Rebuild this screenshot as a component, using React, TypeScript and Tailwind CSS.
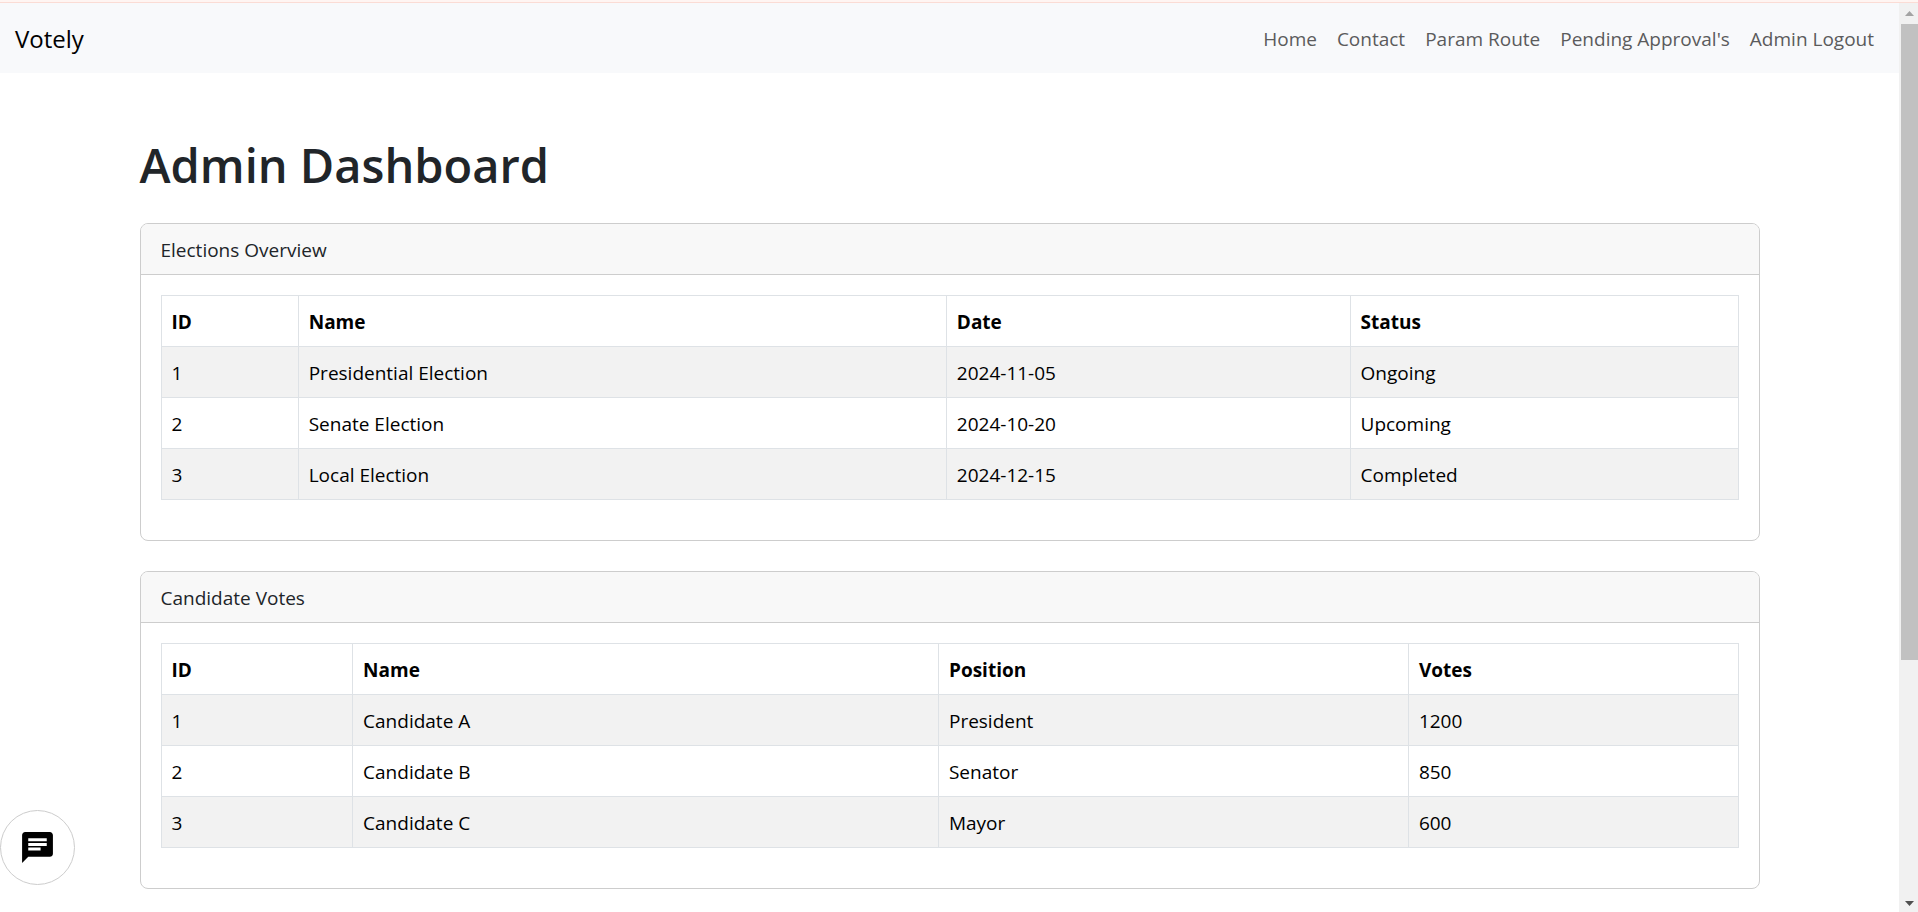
import { MdChat } from "react-icons/md";

const navLinks = ["Home", "Contact", "Param Route", "Pending Approval's", "Admin Logout"];

type Column = { label: string; width: string };

const electionColumns: Column[] = [
  { label: "ID", width: "w-[8.7%]" },
  { label: "Name", width: "w-[41.1%]" },
  { label: "Date", width: "w-[25.6%]" },
  { label: "Status", width: "w-[24.6%]" },
];

const elections = [
  ["1", "Presidential Election", "2024-11-05", "Ongoing"],
  ["2", "Senate Election", "2024-10-20", "Upcoming"],
  ["3", "Local Election", "2024-12-15", "Completed"],
];

const voteColumns: Column[] = [
  { label: "ID", width: "w-[12.15%]" },
  { label: "Name", width: "w-[37.15%]" },
  { label: "Position", width: "w-[29.8%]" },
  { label: "Votes", width: "w-[20.9%]" },
];

const votes = [
  ["1", "Candidate A", "President", "1200"],
  ["2", "Candidate B", "Senator", "850"],
  ["3", "Candidate C", "Mayor", "600"],
];

function TableCard({ title, columns, rows }: { title: string; columns: Column[]; rows: string[][] }) {
  return (
    <section className="overflow-hidden rounded-lg border border-[#cdcdcd] bg-white">
      <h2 className="border-b border-[#cdcdcd] bg-[#f8f8f8] px-5 pt-[11px] pb-[9px] text-[19px] leading-[30px] text-[#212529]">
        {title}
      </h2>
      <div className="px-5 pt-5 pb-10">
        <table className="w-full table-fixed border-collapse text-left text-[19px] leading-[30px] text-black">
          <thead>
            <tr>
              {columns.map((column) => (
                <th
                  key={column.label}
                  className={`border border-[#dee2e6] px-2.5 pt-[11px] pb-[9px] font-bold ${column.width}`}
                >
                  {column.label}
                </th>
              ))}
            </tr>
          </thead>
          <tbody>
            {rows.map((row) => (
              <tr key={row[0]} className="odd:bg-[#f2f2f2]">
                {row.map((cell, i) => (
                  <td key={i} className="border border-[#dee2e6] px-2.5 pt-[11px] pb-[9px]">
                    {cell}
                  </td>
                ))}
              </tr>
            ))}
          </tbody>
        </table>
      </div>
    </section>
  );
}

function ScrollRail() {
  return (
    <div className="flex w-[19px] shrink-0 flex-col bg-[#f1f1f1] pl-0.5">
      <button type="button" aria-label="Scroll up" className="flex h-[21px] shrink-0 items-center justify-center">
        <svg width="9" height="5" viewBox="0 0 9 5" fill="#a3a3a3">
          <path d="M4.5 0 9 5H0z" />
        </svg>
      </button>
      <div className="flex-1">
        <div className="h-[73%] bg-[#c1c1c1]" />
      </div>
      <button type="button" aria-label="Scroll down" className="flex h-[17px] shrink-0 items-center justify-center">
        <svg width="9" height="5" viewBox="0 0 9 5" fill="#505050">
          <path d="M0 0h9L4.5 5z" />
        </svg>
      </button>
    </div>
  );
}

export default function App() {
  return (
    <div className="flex h-screen flex-col bg-white font-['Open_Sans','Noto_Sans',sans-serif]">
      <div className="h-[3px] shrink-0 border-b border-[#fbdcd5] bg-[#fff5f2]" />
      <div className="flex min-h-0 flex-1">
        <div className="min-w-0 flex-1 overflow-y-auto [scrollbar-width:none]">
          <nav className="flex h-[70px] items-center justify-between bg-[#f8f9fb] px-[15px] pt-0.5">
            <a href="#" className="text-2xl text-black">
              Votely
            </a>
            <ul className="flex text-[19px] leading-[30px] text-[#5b5b5c]">
              {navLinks.map((link) => (
                <li key={link}>
                  <a href="#" className="px-2.5">
                    {link}
                  </a>
                </li>
              ))}
            </ul>
          </nav>
          <main className="mx-auto flex max-w-[1650px] flex-col px-[15px] pt-[62px] pb-[30px]">
            <h1 className="mb-7 text-[47px] leading-[60px] font-semibold text-[#212529]">Admin Dashboard</h1>
            <div className="flex flex-col gap-[30px]">
              <TableCard title="Elections Overview" columns={electionColumns} rows={elections} />
              <TableCard title="Candidate Votes" columns={voteColumns} rows={votes} />
            </div>
          </main>
        </div>
        <ScrollRail />
      </div>
      <button
        type="button"
        aria-label="Open chat"
        className="fixed bottom-[27px] left-0 flex size-[75px] items-center justify-center rounded-full border border-[#ccc] bg-white text-black"
      >
        <MdChat size={37} />
      </button>
    </div>
  );
}
